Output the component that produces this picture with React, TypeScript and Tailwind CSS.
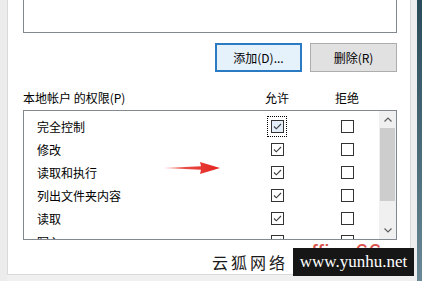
import React from "react";

const font = { fontFamily: '"Noto Sans CJK SC", "Microsoft YaHei", sans-serif' };

function Check({ checked, focus }: { checked: boolean; focus?: boolean }) {
  const box = (
    <div
      className={`w-[13px] h-[13px] border border-[#333333] ${focus ? "bg-[#e3eef9]" : "bg-white"} flex items-center justify-center`}
    >
      {checked && (
        <svg width="11" height="11" viewBox="0 0 11 11">
          <path d="M2 5.5 L4.3 7.8 L9 3" stroke="#3c3c3c" strokeWidth="1.1" fill="none" />
        </svg>
      )}
    </div>
  );
  if (focus) {
    return (
      <div className="w-[20px] h-[21px] border border-dotted border-black flex items-center justify-center">
        {box}
      </div>
    );
  }
  return box;
}

const rows = ["完全控制", "修改", "读取和执行", "列出文件夹内容", "读取", "写入"];

export default function App() {
  return (
    <div className="relative w-[422px] h-[281px] bg-[#f0f0f0] overflow-hidden flex text-[12px] text-black" style={font}>
      <div className="w-[7px] shrink-0 bg-[#ececec]" />
      <div className="w-[404px] h-[275px] shrink-0 bg-white border-l border-r border-b border-[#d9d9d9] pl-[15px] pr-[13px] flex flex-col">
        <div className="h-[33px] border-l border-r border-b border-[#828790] bg-white" />
        <div className="mt-[10px] flex justify-end gap-[8px]">
          <div className="w-[87px] h-[29px] border-2 border-[#2b7bc4] bg-[#e5f1fb] flex items-center justify-center">
            添加(D)...
          </div>
          <div className="w-[87px] h-[29px] border border-[#adadad] bg-[#e1e1e1] flex items-center justify-center">
            删除(R)
          </div>
        </div>
        <div className="mt-[18px] h-[16px] flex items-center">
          <div className="flex-1">本地帐户 的权限(P)</div>
          <div className="w-[40px] text-center">允许</div>
          <div className="w-[30px]" />
          <div className="w-[40px] text-center">拒绝</div>
          <div className="w-[30px]" />
        </div>
        <div className="mt-[4px] h-[130px] border border-[#828790] flex">
          <div className="flex-1 overflow-hidden pt-[4px]">
            {rows.map((r, i) => (
              <div key={r} className="h-[23px] flex items-center">
                <div className="flex-1 pl-[13px]">{r}</div>
                <div className="w-[40px] flex justify-center">
                  <Check checked focus={i === 0} />
                </div>
                <div className="w-[30px]" />
                <div className="w-[40px] flex justify-center">
                  <Check checked={false} />
                </div>
                <div className="w-[12px]" />
              </div>
            ))}
          </div>
          <div className="w-[17px] bg-[#f0f0f0] flex flex-col">
            <div className="h-[17px] flex items-center justify-center">
              <svg width="8" height="5" viewBox="0 0 8 5">
                <path d="M0.5 4.5 L4 1 L7.5 4.5" stroke="#606060" strokeWidth="1.2" fill="none" />
              </svg>
            </div>
            <div className="h-[73px] mx-[1px] bg-[#cdcdcd]" />
            <div className="flex-1" />
            <div className="h-[17px] flex items-center justify-center">
              <svg width="8" height="5" viewBox="0 0 8 5">
                <path d="M0.5 0.5 L4 4 L7.5 0.5" stroke="#606060" strokeWidth="1.2" fill="none" />
              </svg>
            </div>
          </div>
        </div>
      </div>
      <div className="w-[6px] shrink-0 bg-[#eeeeee]" />
      <div className="w-[5px] shrink-0 bg-gradient-to-b from-[#2a4c5a] to-[#6a8896]" />

      {/* red arrow */}
      <svg className="absolute left-[160px] top-[158px]" width="64" height="20" viewBox="0 0 64 20">
        <defs>
          <linearGradient id="ar" x1="0" x2="1" y1="0" y2="0">
            <stop offset="0" stopColor="#f6b0ae" />
            <stop offset="0.4" stopColor="#e94a44" />
            <stop offset="1" stopColor="#e3241f" />
          </linearGradient>
        </defs>
        <polygon points="3,10 41,8.3 40,4 60,10 40,16 41,11.7" fill="url(#ar)" />
      </svg>

      {/* watermark */}
      <div className="absolute left-[212px] top-[251px] text-[16px] leading-[22px] tracking-[3px] text-[#1a1a1a]">
        云狐网络
      </div>
      <div
        className="absolute left-[298px] top-[241px] text-[24px] leading-[24px] text-[#d8544d]"
        style={{ fontFamily: '"Liberation Sans", Arial, sans-serif' }}
      >
        office66.cn
      </div>
      <div
        className="absolute left-[293px] top-[248px] w-[121px] h-[28px] bg-[#161616] flex items-center justify-center text-white text-[17px]"
        style={{ fontFamily: '"Liberation Serif", "Times New Roman", serif' }}
      >
        www.yunhu.net
      </div>
    </div>
  );
}
